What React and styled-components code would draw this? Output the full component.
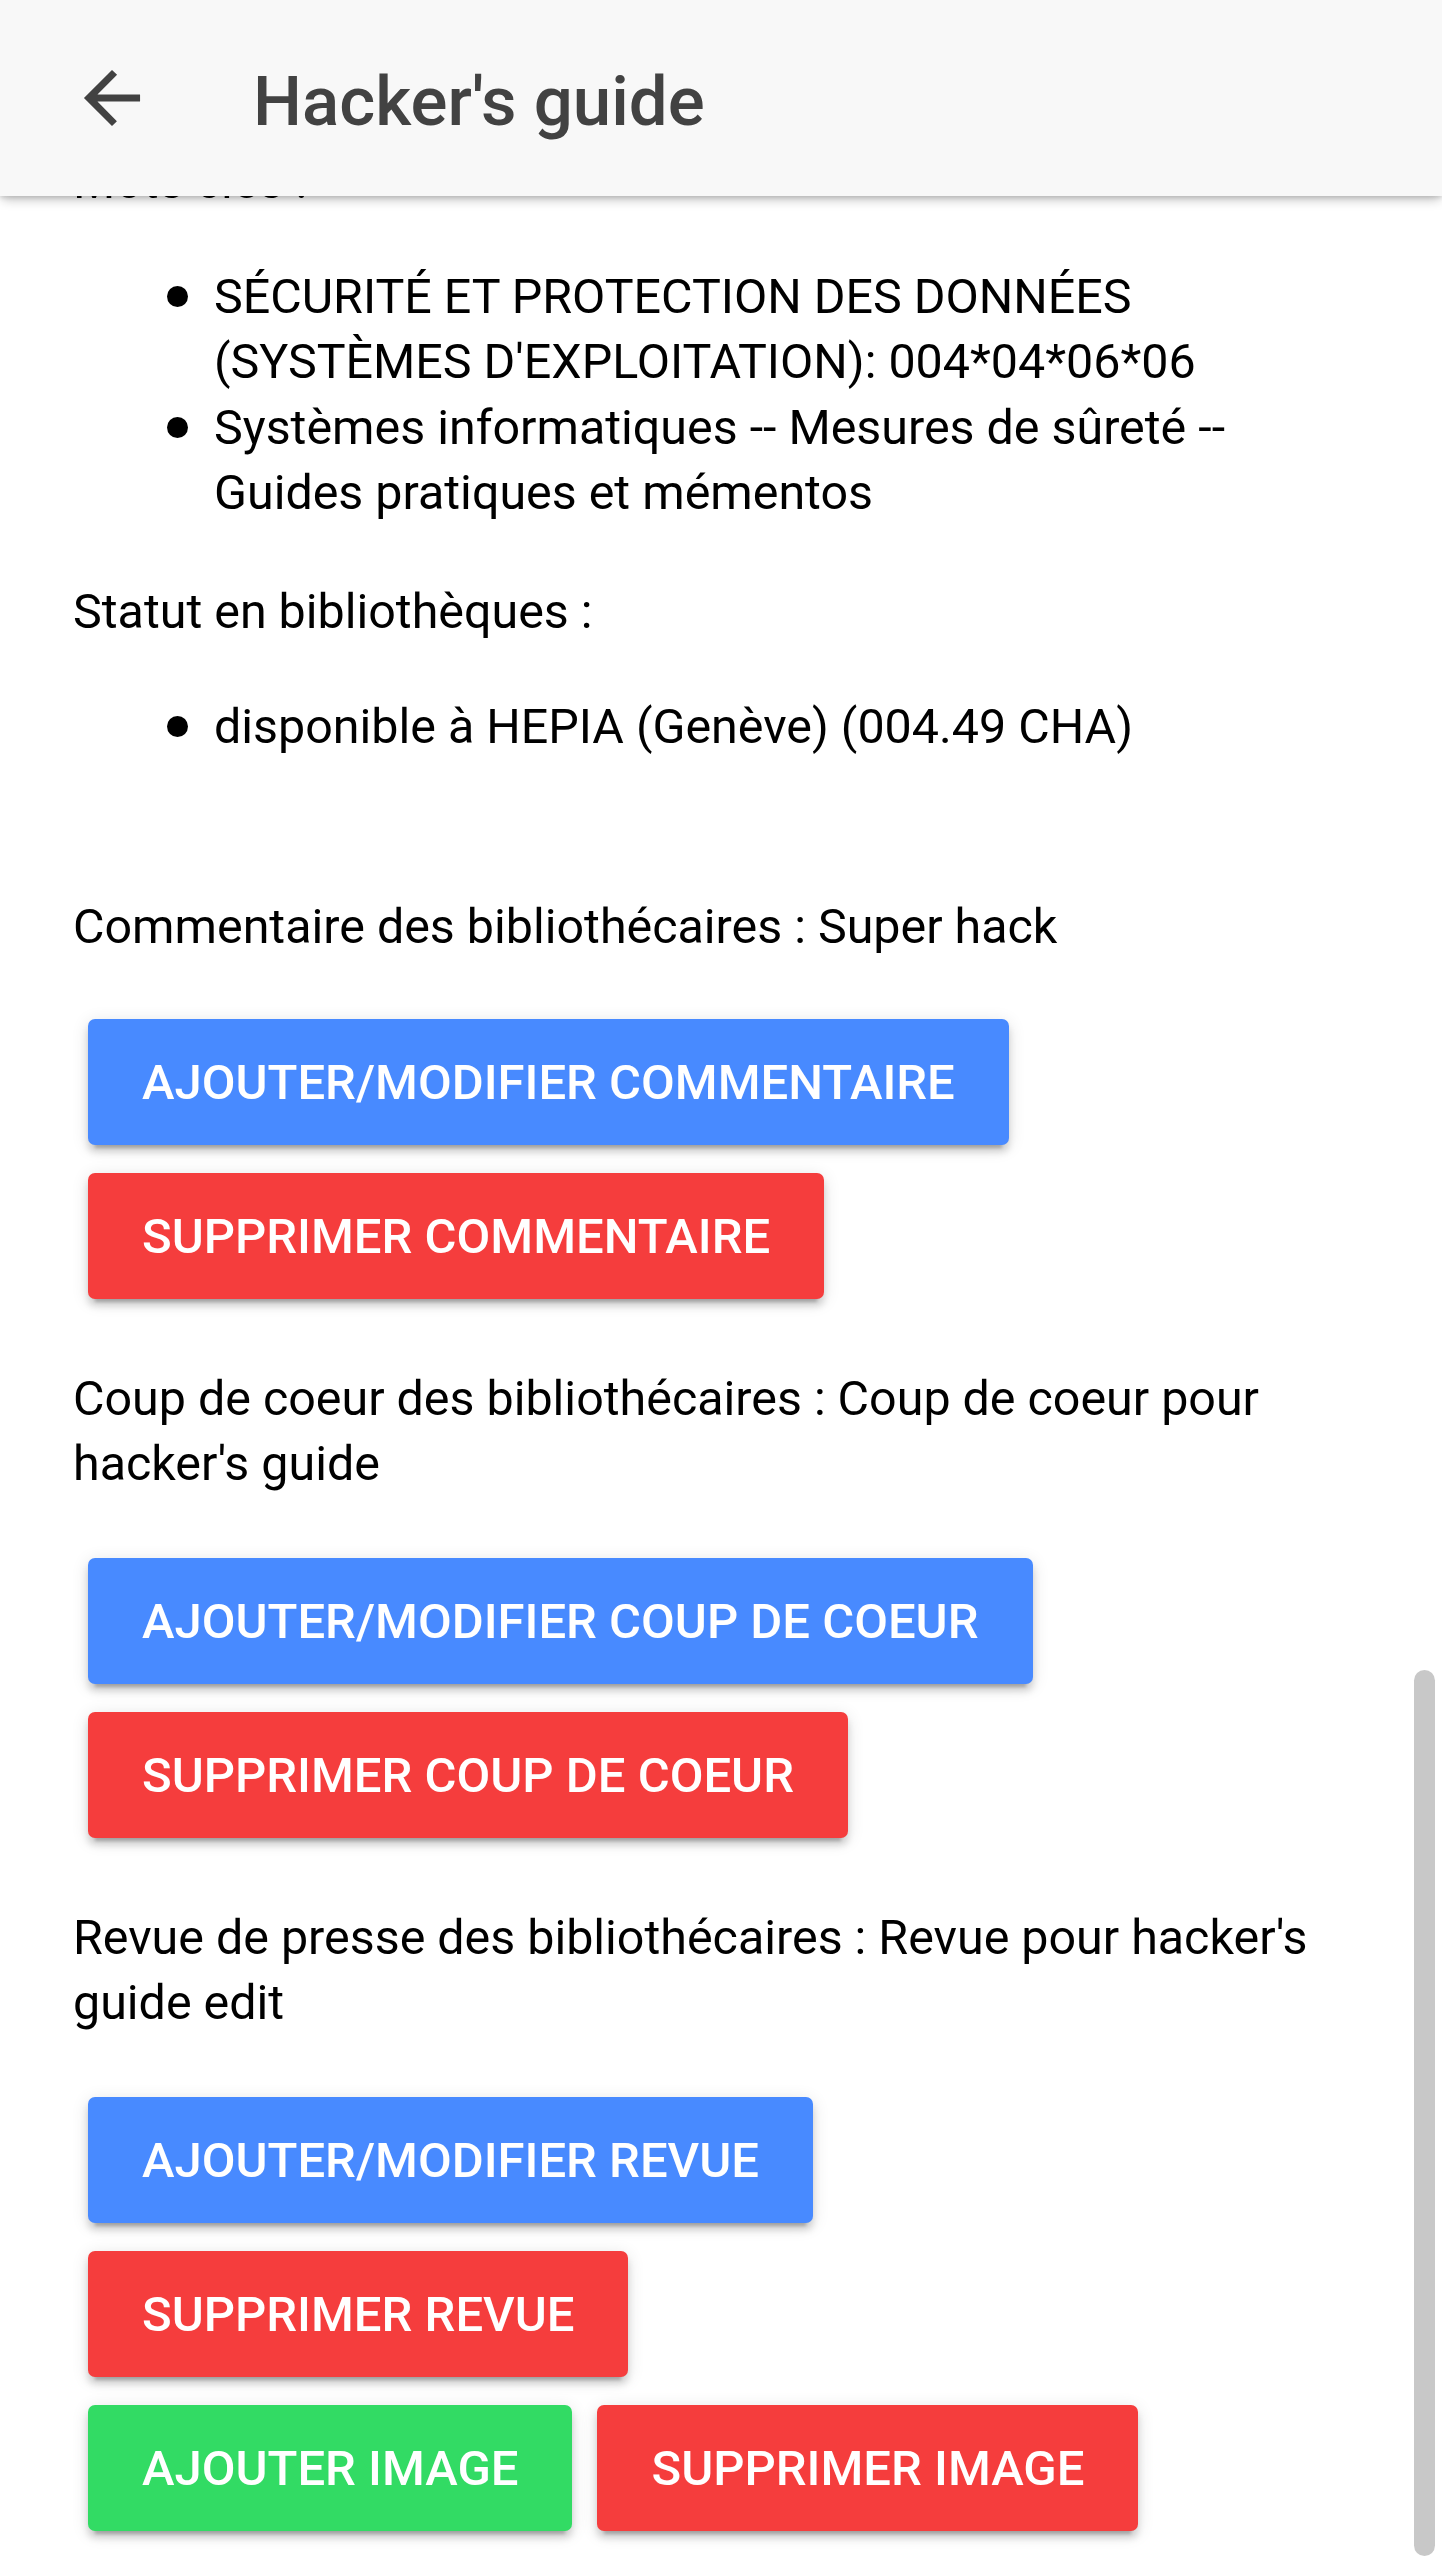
import React from "react";
import styled, { createGlobalStyle } from "styled-components";

const GlobalStyle = createGlobalStyle`
  html, body {
    margin: 0;
    padding: 0;
    background: #fff;
  }
  body {
    font-family: Roboto, "Noto Sans", "Liberation Sans", sans-serif;
    -webkit-font-smoothing: antialiased;
  }
`;

const Page = styled.div`
  position: relative;
  width: 1442px;
  height: 2562px;
  overflow: hidden;
  display: flex;
  flex-direction: column;
  background: #fff;
`;

const Toolbar = styled.header`
  position: relative;
  z-index: 2;
  flex: 0 0 196px;
  display: flex;
  align-items: center;
  padding-left: 70px;
  background: #f8f8f8;
  box-shadow: 0 6px 10px -2px rgba(0, 0, 0, 0.22), 0 2px 4px rgba(0, 0, 0, 0.12);
`;

const BackButton = styled.button`
  display: flex;
  align-items: center;
  justify-content: center;
  width: 84px;
  height: 84px;
  padding: 0;
  border: 0;
  background: transparent;
  color: #424242;
`;

const Title = styled.h1`
  margin: 0 0 0 99px;
  padding-top: 8px;
  font-size: 69px;
  font-weight: 500;
  color: #424242;
  line-height: 1.17;
`;

const Content = styled.main`
  position: relative;
  z-index: 1;
  flex: 1;
  display: flex;
  flex-direction: column;
  align-items: flex-start;
  padding: 0 73px;
  margin-top: -47px;
  color: #000;
  font-size: 48.4px;
  line-height: 65px;
`;

const Label = styled.p`
  margin: ${(p) => p.$top || 0}px 0 0;
`;

const List = styled.ul`
  margin: ${(p) => p.$top || 0}px 0 0;
  padding: 0 0 0 94px;
  list-style: none;
`;

const Item = styled.li`
  display: flex;
  align-items: flex-start;
  & + & {
    margin-top: 1px;
  }
`;

const Bullet = styled.span`
  flex: 0 0 21px;
  height: 21px;
  margin: 22px 26px 0 0;
  border-radius: 50%;
  background: #000;
`;

const ButtonGroup = styled.div`
  margin-top: ${(p) => p.$top || 48}px;
  padding-left: 8px;
  display: flex;
  flex-direction: column;
`;

const ButtonRow = styled.div`
  display: flex;
  gap: 11px;
`;

const colors = {
  primary: "#488aff",
  danger: "#f53d3d",
  secondary: "#32db64",
};

const Button = styled.button`
  height: 126px;
  margin: 14px 7px;
  padding: 0 54px;
  border: 0;
  border-radius: 7px;
  background: ${(p) => colors[p.$color]};
  color: #fff;
  font-family: Roboto, "Noto Sans", "Liberation Sans", sans-serif;
  font-size: 49px;
  font-weight: 500;
  text-transform: uppercase;
  white-space: nowrap;
  box-shadow: 0 7px 7px 0 rgba(0, 0, 0, 0.14), 0 10px 3px -7px rgba(0, 0, 0, 0.2),
    0 3px 17px 0 rgba(0, 0, 0, 0.12);
`;

const ScrollThumb = styled.div`
  position: absolute;
  z-index: 3;
  right: 7px;
  top: 1670px;
  width: 21px;
  height: 886px;
  border-radius: 11px;
  background: #c8c8c8;
`;

const ArrowBack = () => (
  <svg width="84" height="84" viewBox="0 0 512 512" fill="currentColor">
    <path d="M427 234.625H167.296l119.702-119.702L256 85 85 256l171 171 29.922-29.924-118.626-119.701H427v-42.75z" />
  </svg>
);

const subjects = [
  "SÉCURITÉ ET PROTECTION DES DONNÉES (SYSTÈMES D'EXPLOITATION): 004*04*06*06",
  "Systèmes informatiques -- Mesures de sûreté -- Guides pratiques et mémentos",
];

const App = () => {
  return (
    <Page>
      <GlobalStyle />
      <Toolbar>
        <BackButton aria-label="Retour">
          <ArrowBack />
        </BackButton>
        <Title>Hacker's guide</Title>
      </Toolbar>
      <Content>
        <Label>Mots clés :</Label>
        <List $top={50}>
          {subjects.map((s) => (
            <Item key={s}>
              <Bullet />
              <span>{s}</span>
            </Item>
          ))}
        </List>
        <Label $top={54}>Statut en bibliothèques :</Label>
        <List $top={50}>
          <Item>
            <Bullet />
            <span>disponible à HEPIA (Genève) (004.49 CHA)</span>
          </Item>
        </List>
        <Label $top={135}>Commentaire des bibliothécaires : Super hack</Label>
        <ButtonGroup $top={46}>
          <ButtonRow>
            <Button $color="primary">Ajouter/modifier commentaire</Button>
          </ButtonRow>
          <ButtonRow>
            <Button $color="danger">Supprimer commentaire</Button>
          </ButtonRow>
        </ButtonGroup>
        <Label $top={53}>
          Coup de coeur des bibliothécaires : Coup de coeur pour hacker's guide
        </Label>
        <ButtonGroup>
          <ButtonRow>
            <Button $color="primary">Ajouter/modifier coup de coeur</Button>
          </ButtonRow>
          <ButtonRow>
            <Button $color="danger">Supprimer coup de coeur</Button>
          </ButtonRow>
        </ButtonGroup>
        <Label $top={53}>
          Revue de presse des bibliothécaires : Revue pour hacker's guide edit
        </Label>
        <ButtonGroup>
          <ButtonRow>
            <Button $color="primary">Ajouter/modifier revue</Button>
          </ButtonRow>
          <ButtonRow>
            <Button $color="danger">Supprimer revue</Button>
          </ButtonRow>
          <ButtonRow>
            <Button $color="secondary">Ajouter image</Button>
            <Button $color="danger">Supprimer image</Button>
          </ButtonRow>
        </ButtonGroup>
      </Content>
      <ScrollThumb />
    </Page>
  );
};

export default App;
